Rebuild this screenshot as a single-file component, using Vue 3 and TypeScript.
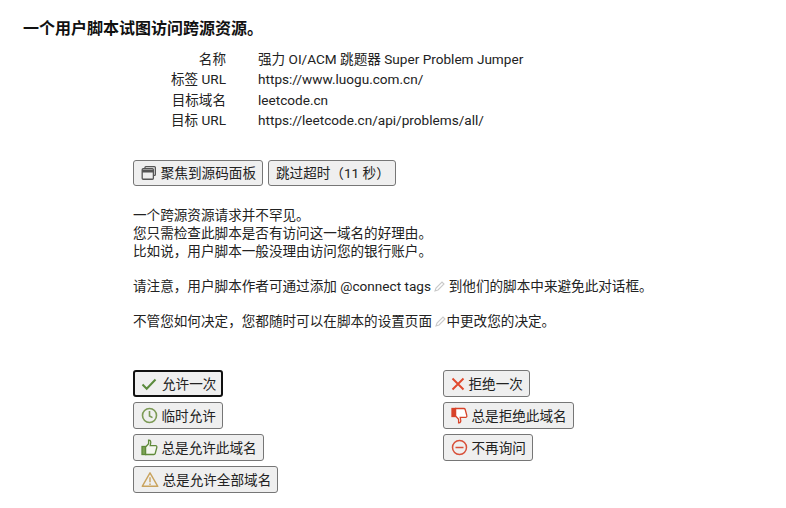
<script setup lang="ts">
const details = [
  { label: '名称', value: '强力 OI/ACM 跳题器 Super Problem Jumper' },
  { label: '标签 URL', value: 'https://www.luogu.com.cn/' },
  { label: '目标域名', value: 'leetcode.cn' },
  { label: '目标 URL', value: 'https://leetcode.cn/api/problems/all/' },
]
</script>

<template>
  <div class="page">
    <h2 class="title">一个用户脚本试图访问跨源资源。</h2>

    <div class="details">
      <template v-for="row in details" :key="row.label">
        <div class="label">{{ row.label }}</div>
        <div class="value">{{ row.value }}</div>
      </template>
    </div>

    <div class="content">
      <div class="top-buttons">
        <button class="btn focus-btn">
          <svg width="16" height="16" viewBox="0 0 16 16" fill="none" stroke="#555" stroke-width="1.3">
            <path d="M4 3V2.4c0-.5.4-.9.9-.9h8.7c.5 0 .9.4.9.9v7.2c0 .5-.4.9-.9.9H13" />
            <rect x="1.2" y="3.7" width="11.3" height="10.6" rx="1" />
            <path d="M1.2 6.2h11.3" stroke-width="2.6" />
          </svg>
          <span>聚焦到源码面板</span>
        </button>
        <button class="btn skip-btn">跳过超时（11 秒）</button>
      </div>

      <p class="text first">一个跨源资源请求并不罕见。<br />您只需检查此脚本是否有访问这一域名的好理由。<br />比如说，用户脚本一般没理由访问您的银行账户。</p>
      <p class="text">请注意，用户脚本作者可通过添加 @connect tags <svg class="pencil" width="11" height="11" viewBox="0 0 11 11"><path d="M1 10l1-3 6-6 2 2-6 6z" fill="none" stroke="#c9c9c9" stroke-width="1.1" /></svg> 到他们的脚本中来避免此对话框。</p>
      <p class="text">不管您如何决定，您都随时可以在脚本的设置页面 <svg class="pencil" width="11" height="11" viewBox="0 0 11 11"><path d="M1 10l1-3 6-6 2 2-6 6z" fill="none" stroke="#c9c9c9" stroke-width="1.1" /></svg>中更改您的决定。</p>

      <div class="actions">
        <div class="col left">
          <button class="btn action primary">
            <svg width="16" height="16" viewBox="0 0 16 16" fill="none" stroke="#5a8a3c" stroke-width="2"><path d="M1.5 8.5l4.2 4.2 8.8-9.2" /></svg>
            <span>允许一次</span>
          </button>
          <button class="btn action">
            <svg width="17" height="17" viewBox="0 0 17 17" fill="none" stroke="#7c9a55" stroke-width="1.6"><circle cx="8.5" cy="8.5" r="7" /><path d="M8.5 4v5l3 1.6" /></svg>
            <span>临时允许</span>
          </button>
          <button class="btn action">
            <svg width="17" height="17" viewBox="0 0 17 17" stroke="#5f8a3a" stroke-width="1.3"><rect x="1" y="7.5" width="3.6" height="8" fill="#7da356" /><path d="M4.6 8l3-3.2V1.2c1.8-.2 2.6 1.4 2 3.4L9.2 6.6h5.4c1 0 1.5 1 1.2 1.9l-1.6 6c-.2.7-.7 1-1.4 1H4.6z" fill="#f4f7ef" /></svg>
            <span>总是允许此域名</span>
          </button>
          <button class="btn action">
            <svg width="18" height="17" viewBox="0 0 19 17" fill="none" stroke="#c9a35e" stroke-width="1.5"><path d="M9.5 1.5l8.2 14.2H1.3z" stroke-linejoin="round" /><path d="M9.5 6v5.5M9.5 12.6v1.6" /></svg>
            <span>总是允许全部域名</span>
          </button>
        </div>
        <div class="col">
          <button class="btn action">
            <svg width="14" height="14" viewBox="0 0 14 14" fill="none" stroke="#e0492e" stroke-width="1.9"><path d="M1.5 1.5l11 11M12.5 1.5l-11 11" /></svg>
            <span>拒绝一次</span>
          </button>
          <button class="btn action">
            <svg width="17" height="17" viewBox="0 0 17 17" stroke="#d8432a" stroke-width="1.3"><rect x="1" y="1.5" width="3.6" height="8" fill="#d8432a" /><path d="M4.6 9l3 3.2v3.6c1.8.2 2.6-1.4 2-3.4l-.4-2h5.4c1 0 1.5-1 1.2-1.9l-1.6-6c-.2-.7-.7-1-1.4-1H4.6z" fill="#fff" /></svg>
            <span>总是拒绝此域名</span>
          </button>
          <button class="btn action">
            <svg width="17" height="17" viewBox="0 0 17 17" fill="none" stroke="#d8503a" stroke-width="1.5"><circle cx="8.5" cy="8.5" r="7" /><path d="M4.5 8.5h8" /></svg>
            <span>不再询问</span>
          </button>
        </div>
      </div>
    </div>
  </div>
</template>

<style scoped>
.page {
  width: 786px;
  height: 508px;
  overflow: hidden;
  background: #fff;
  color: #222;
  font-family: Roboto, "Noto Sans CJK SC", sans-serif;
  font-size: 13.6px;
  padding: 19px 0 0 23px;
  box-sizing: border-box;
}

.title {
  margin: 0 0 10px;
  font-size: 16px;
  line-height: 20px;
  font-weight: 700;
  color: #111;
}

.details {
  display: grid;
  grid-template-columns: 203px auto;
  column-gap: 32px;
  grid-auto-rows: 20.3px;
  line-height: 20px;
}

.label {
  text-align: right;
}

.content {
  margin: 30px 0 0 110px;
}

.top-buttons {
  display: flex;
  gap: 5px;
}

.btn {
  display: flex;
  align-items: center;
  height: 26px;
  padding: 0 6px 0 7px;
  box-sizing: border-box;
  background: #efefef;
  border: 1px solid #767676;
  border-radius: 3px;
  color: #222;
  font-family: inherit;
  font-size: 13.6px;
  line-height: 18px;
  white-space: nowrap;
}

.focus-btn {
  width: 130px;
  gap: 4px;
}

.skip-btn {
  width: 128px;
}

.text {
  margin: 0 0 17px;
  line-height: 18px;
}

.text.first {
  margin-top: 20px;
}

.pencil {
  vertical-align: -1px;
}

.actions {
  display: flex;
  margin-top: 40px;
}

.col {
  display: flex;
  flex-direction: column;
  align-items: flex-start;
  gap: 5px;
}

.col.left {
  width: 310px;
}

.action {
  height: 27px;
  gap: 3.5px;
}

.action.primary {
  border: 2px solid #111;
  padding: 0 5px 0 6px;
  gap: 5px;
}
</style>
